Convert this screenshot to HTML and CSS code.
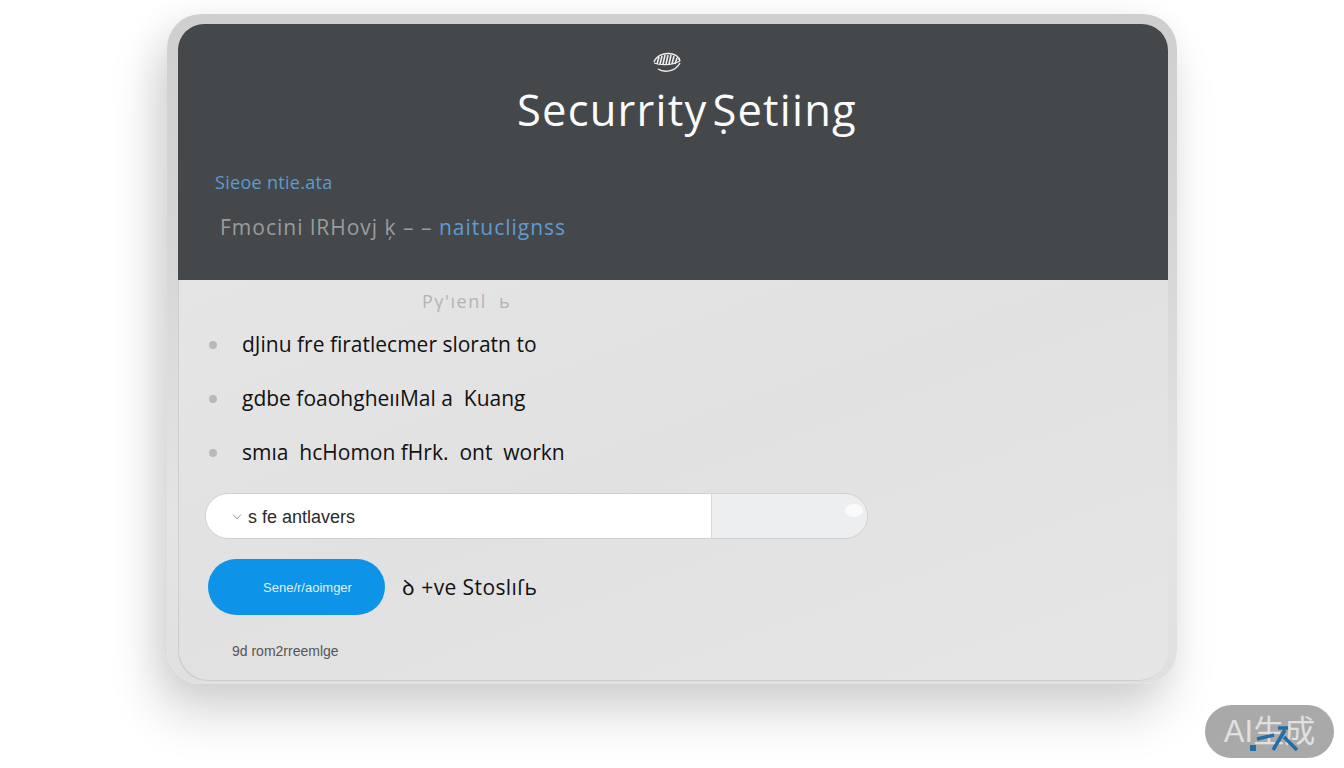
FILE: index.html
```html
<!DOCTYPE html>
<html lang="en">
<head>
    <meta charset="UTF-8">
    <meta name="viewport" content="width=device-width, initial-scale=1.0">
    <title>Security Setiing</title>
    <link rel="stylesheet" href="styles.css">
</head>
<body>
    <div class="frame">
        <div class="card">
            <header class="card-header">
                <svg class="logo" width="34" height="24" viewBox="0 0 32 24" fill="none" stroke="#eee">
                    <path d="M3 12C5 6 12 3 18 3.500C24 4 28 7 29 11" stroke-width="1.500"/>
                    <path d="M6 14L8 7M9 14L11 6M12 14L14 5M15 14L17 5M18 14L20 5M21 14L23 6M24 14L26 8" stroke-width="1.600"/>
                    <path d="M3 13C8 15 20 16 29 11" stroke-width="1.200"/>
                    <path d="M7 19C13 23 24 22 29 13" stroke-width="1.500"/>
                </svg>
                <h1>Securrity<span class="title-gap">Ṣetiing</span></h1>
                <p class="section-link">Sieoe ntie.ata</p>
                <p class="section-row">Fmocini lRHovj ķ – – <span class="row-accent">naituclignss</span></p>
            </header>
            <div class="card-body">
                <p class="list-caption">Pγ'ıenl  ь</p>
                <ul class="options">
                    <li>dJinu fre firatlecmer sloratn to</li>
                    <li>gdbe foaohgheııMal a  Kuang</li>
                    <li>smıa  hcHomon fHrk.  ont  workn</li>
                </ul>
                <div class="field">
                    <div class="field-input">
                        <svg class="chevron" width="10" height="8" viewBox="0 0 10 8" fill="none" stroke="#9a9a9a">
                            <path d="M1 1.500L5 6L9 1.500"/>
                        </svg>
                        <span>s fe antlavers</span>
                    </div>
                    <div class="field-side"><span class="field-knob"></span></div>
                </div>
                <div class="actions">
                    <button class="primary-btn">Sene/r/aoimger</button>
                    <span class="actions-label">ꝺ +ve Stoslıſь</span>
                </div>
                <p class="footnote">9d rom2rreemlge</p>
            </div>
        </div>
    </div>
    <div class="ai-badge">
        AI生成
        <svg class="badge-mark" width="50" height="30" viewBox="0 0 50 30" fill="none" stroke="#1f6fa8" stroke-width="3.500">
            <path d="M7 14L24 10"/>
            <path d="M28 3H38"/>
            <path d="M35 5L23 25"/>
            <path d="M34 12L47 25"/>
            <path d="M0 20H6V26H0Z" fill="#1f6fa8" stroke="none"/>
        </svg>
    </div>
</body>
</html>
```

FILE: styles.css
```css
html, body {
    height: 100%;
}
body {
    margin: 0;
    background: #fff;
    font-family: 'Liberation Sans', Arial, sans-serif;
    overflow: hidden;
}
p, h1, ul {
    margin: 0;
    padding: 0;
}

/* marco exterior */
.frame {
    width: 1010px;
    height: 670px;
    box-sizing: border-box;
    margin: 14px 0 0 167px;
    padding: 10px 9px 3px 11px;
    background: linear-gradient(180deg, #cfcfcf 0%, #d6d6d6 35%, #e4e4e4 75%, #e0e0e0 100%);
    border-radius: 34px;
    box-shadow: -10px 30px 50px rgba(0,0,0,0.16), -8px 4px 36px rgba(0,0,0,0.06);
}
.card {
    height: 100%;
    display: flex;
    flex-direction: column;
    border-radius: 26px 26px 30px 30px;
    overflow: hidden;
    background: linear-gradient(160deg, #e8e8e8 0%, #e1e1e1 60%, #e6e6e6 100%);
    box-shadow: inset 1px -1px 0 #cdcdcd;
}

/* cabecera */
.card-header {
    height: 256px;
    flex: none;
    box-sizing: border-box;
    padding: 26px 0 0 37px;
    background: #45484b;
}
.logo {
    display: block;
    margin: 0 0 0 435px;
}
h1 {
    margin: 12px 0 0 302px;
    height: 48px;
    font-family: 'Open Sans', sans-serif;
    font-size: 43.500px;
    line-height: 48px;
    font-weight: 400;
    color: #fafafa;
    letter-spacing: 1.200px;
    white-space: nowrap;
}
.title-gap {
    margin-left: 5px;
}
.section-link {
    margin-top: 36px;
    font-family: 'Open Sans', sans-serif;
    font-size: 18px;
    line-height: 24px;
    letter-spacing: 0.300px;
    color: #5b9bd0;
}
.section-row {
    margin: 19px 0 0 5px;
    font-family: 'Open Sans', sans-serif;
    font-size: 21px;
    line-height: 28px;
    letter-spacing: 1px;
    color: #9a9c9e;
    white-space: nowrap;
}
.row-accent {
    color: #5f9bd0;
}

/* cuerpo */
.card-body {
    flex: 1;
    padding: 10px 0 0 27px;
}
.list-caption {
    margin-left: 217px;
    font-family: 'Open Sans', sans-serif;
    font-size: 18px;
    line-height: 22px;
    letter-spacing: 1.500px;
    color: #b4b4b4;
    white-space: pre;
}
.options {
    list-style: none;
    margin-top: 7px;
}
.options li {
    position: relative;
    padding-left: 37px;
    height: 54px;
    font-family: 'Open Sans', sans-serif;
    font-size: 21px;
    line-height: 50px;
    color: #111;
    white-space: pre;
}
.options li:before {
    content: "";
    position: absolute;
    left: 4px;
    top: 22px;
    width: 8px;
    height: 8px;
    border-radius: 50%;
    background: #b9b9b9;
}
.field {
    display: flex;
    width: 663px;
    height: 46px;
    margin-top: 12px;
    box-sizing: border-box;
    border: 1px solid #d2d2d2;
    border-radius: 24px;
    overflow: hidden;
}
.field-input {
    width: 506px;
    display: flex;
    align-items: center;
    gap: 6px;
    padding: 2px 0 0 26px;
    box-sizing: border-box;
    background: #fff;
    border-right: 1px solid #d8d8d8;
    font-size: 18px;
    color: #2b2b2b;
}
.field-side {
    flex: 1;
    display: flex;
    justify-content: flex-end;
    padding: 10px 4px 0 0;
    background: #edeef0;
}
.field-knob {
    width: 18px;
    height: 13px;
    border-radius: 50%;
    background: #fafafa;
}
.actions {
    display: flex;
    align-items: center;
    gap: 17px;
    margin: 20px 0 0 3px;
}
.primary-btn {
    width: 177px;
    height: 56px;
    border: none;
    border-radius: 28px;
    background: #0d93e8;
    color: #dff1fc;
    font-family: 'Liberation Sans', Arial, sans-serif;
    font-size: 13px;
    padding: 0 0 0 22px;
}
.actions-label {
    font-family: 'Open Sans', sans-serif;
    font-size: 21px;
    letter-spacing: 0.400px;
    color: #111;
    white-space: nowrap;
}
.footnote {
    margin: 27px 0 0 27px;
    font-size: 14px;
    line-height: 18px;
    color: #555;
}

/* sello */
.ai-badge {
    position: absolute;
    left: 1205px;
    top: 705px;
    width: 129px;
    height: 53px;
    border-radius: 27px;
    background: #a9a9a9;
    color: #e0e0e0;
    font-family: 'Liberation Sans', 'Noto Sans CJK SC', sans-serif;
    font-size: 31px;
    line-height: 53px;
    text-align: center;
}
.badge-mark {
    position: absolute;
    left: 45px;
    top: 20px;
}
```
